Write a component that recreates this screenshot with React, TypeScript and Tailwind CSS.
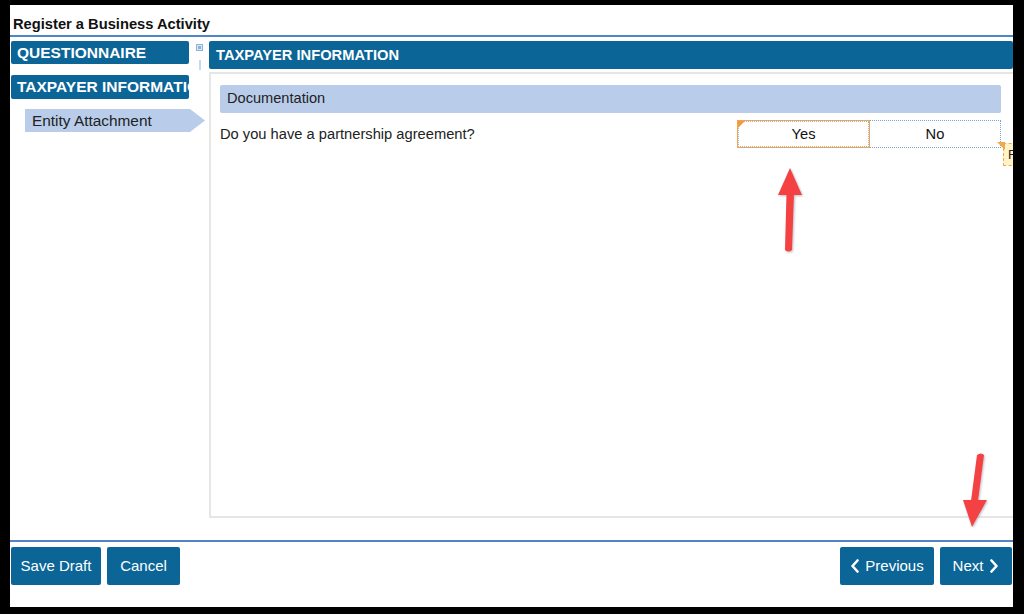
import React from "react";

const Chevron = ({ dir }: { dir: "left" | "right" }) => (
  <svg width="10" height="14" viewBox="0 0 10 14" className="inline-block">
    <path
      d={dir === "left" ? "M7.5 1.5 L2.5 7 L7.5 12.5" : "M2.5 1.5 L7.5 7 L2.5 12.5"}
      fill="none"
      stroke="white"
      strokeWidth="2.6"
      strokeLinecap="round"
      strokeLinejoin="round"
    />
  </svg>
);

export default function App() {
  return (
    <div className="w-[1024px] h-[614px] bg-black pl-[10px] pt-[5px]">
      <div
        className="relative w-[1003px] h-[602px] bg-white flex flex-col overflow-hidden"
        style={{ fontFamily: '"Liberation Sans", Arial, sans-serif' }}
      >
        {/* Title */}
        <div className="h-[30px] pl-[3px] flex items-end pb-[3px] text-[14.7px] font-bold text-[#111] leading-none">
          Register a Business Activity
        </div>
        <div className="h-[2px] bg-[#4f86c3]" />

        {/* Main */}
        <div className="flex mt-[4px] h-[477px]">
          {/* Sidebar */}
          <div className="w-[180px] pl-[1px] flex flex-col relative z-10">
            <div className="w-[178px] h-[23px] bg-[#0b6597] rounded-[2px] text-white font-bold text-[15.5px] pl-[6px] flex items-center">
              QUESTIONNAIRE
            </div>
            <div className="w-[178px] h-[24px] mt-[11px] bg-[#0b6597] rounded-[2px] text-white font-bold text-[15.5px] pl-[6px] flex items-center overflow-hidden whitespace-nowrap">
              TAXPAYER INFORMATION
            </div>
            <div
              className="ml-[14px] mt-[10px] w-[180px] h-[23px] bg-[#b9cdeb] text-[15.4px] text-[#222] pl-[7px] flex items-center"
              style={{ clipPath: "polygon(0 0, 165px 0, 180px 50%, 165px 100%, 0 100%)" }}
            >
              Entity Attachment
            </div>
          </div>

          {/* Splitter icons */}
          <div className="w-[19px] flex flex-col items-center pt-[3px]">
            <div className="w-[7px] h-[7px] border border-[#8fb0d8] bg-[#dce7f5] flex items-center justify-center">
              <div className="w-[3px] h-[3px] bg-[#8fb0d8]" />
            </div>
            <div className="w-[2px] h-[10px] mt-[9px] bg-[#c9d8ee]" />
          </div>

          {/* Right panel */}
          <div className="w-[804px] flex flex-col">
            <div className="h-[28px] bg-[#0b6597] rounded-[2px] text-white font-bold text-[14.7px] pl-[7px] flex items-center">
              TAXPAYER INFORMATION
            </div>
            <div className="mt-[3px] flex-1 border-2 border-[#e6e6e6] border-r-0 px-[9px] pt-[11px]">
              <div className="h-[28px] w-[781px] bg-[#b9cdeb] rounded-[2px] text-[14.6px] text-[#222] pl-[7px] flex items-center">
                Documentation
              </div>
              <div className="flex items-center mt-[7px] w-[781px]">
                <div className="text-[14.7px] text-[#222] flex-1">Do you have a partnership agreement?</div>
                <div className="flex h-[28px]">
                  <div className="relative w-[133px] h-[28px] border-[1.5px] border-[#f3a54d] flex items-center justify-center text-[14.7px] text-[#111]">
                    <div className="absolute inset-0 border border-dotted border-[#9db8dd]" />
                    <div
                      className="absolute left-0 top-0 w-[7px] h-[7px] bg-[#f19a3e]"
                      style={{ clipPath: "polygon(0 0, 100% 0, 0 100%)" }}
                    />
                    <span className="relative">Yes</span>
                  </div>
                  <div className="w-[131px] h-[28px] border border-dotted border-[#7fa3d3] border-l-0 flex items-center justify-center text-[14.7px] text-[#111]">
                    No
                  </div>
                </div>
              </div>
            </div>
          </div>
        </div>

        {/* Bottom */}
        <div className="h-[2px] bg-[#4f86c3] mt-[22px]" />
        <div className="flex mt-[5px] pl-[1px] pr-[1px]">
          <div className="w-[90px] h-[38px] bg-[#0b6597] rounded-[2px] text-white text-[15px] flex items-center justify-center">
            Save Draft
          </div>
          <div className="w-[73px] h-[38px] ml-[6px] bg-[#0b6597] rounded-[2px] text-white text-[15px] flex items-center justify-center">
            Cancel
          </div>
          <div className="flex-1" />
          <div className="w-[94px] h-[38px] bg-[#0b6597] rounded-[2px] text-white text-[15px] flex items-center justify-center gap-[5px]">
            <Chevron dir="left" />
            Previous
          </div>
          <div className="w-[72px] h-[38px] ml-[6px] bg-[#0b6597] rounded-[2px] text-white text-[15px] flex items-center justify-center gap-[6px]">
            Next
            <Chevron dir="right" />
          </div>
        </div>

        {/* Tooltip partially visible */}
        <div className="absolute left-[993px] top-[138px] w-[20px] h-[23px] bg-[#fff2c6] border border-dashed border-[#f0a94f] text-[13px] text-[#222] pl-[4px] flex items-center">
          F
        </div>
        <div
          className="absolute left-[987px] top-[137px] w-[8px] h-[8px] bg-[#f0a94f]"
          style={{ clipPath: "polygon(0 0, 100% 0, 100% 100%)" }}
        />

        {/* Red arrows overlay */}
        <svg
          className="absolute left-0 top-0 pointer-events-none"
          width="1003"
          height="602"
          viewBox="0 0 1003 602"
        >
          <defs>
            <filter id="sh" x="-50%" y="-50%" width="200%" height="200%">
              <feDropShadow dx="1" dy="1" stdDeviation="1" floodColor="#7a7a90" floodOpacity="0.5" />
            </filter>
          </defs>
          <g filter="url(#sh)" fill="#f44242">
            <polygon points="780,163 768,190 792,190" />
            <path d="M776.5 189 L784 189 L782 245 Q778.5 248 775 245 Z" />
            <polygon points="962,522 953,495 977,495" />
            <path d="M967 450 Q971 447 974 450 L968 496 L961 496 Z" />
          </g>
        </svg>
      </div>
    </div>
  );
}
